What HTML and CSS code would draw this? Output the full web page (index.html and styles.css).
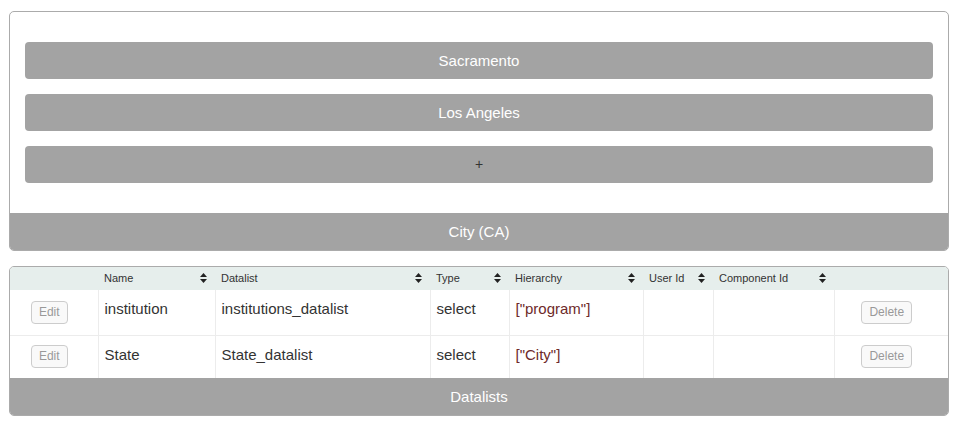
FILE: index.html
```html
<!DOCTYPE html>
<html>
<head>
<meta charset="utf-8">
<link rel="stylesheet" href="styles.css">
</head>
<body>
<div class="page">
  <section class="panel">
    <div class="panel-body">
      <div class="item">Sacramento</div>
      <div class="item">Los Angeles</div>
      <div class="item add">+</div>
    </div>
    <div class="panel-footer">City (CA)</div>
  </section>

  <section class="panel">
    <table class="grid">
      <colgroup>
        <col class="c-edit"><col class="c-name"><col class="c-datalist"><col class="c-type">
        <col class="c-hier"><col class="c-user"><col class="c-comp"><col class="c-del">
      </colgroup>
      <thead>
        <tr>
          <th></th>
          <th><span class="hd">Name</span><svg class="sort" viewBox="0 0 7 10"><path d="M0 4 3.5 0 7 4Z M0 6 3.5 10 7 6Z"/></svg></th>
          <th><span class="hd">Datalist</span><svg class="sort" viewBox="0 0 7 10"><path d="M0 4 3.5 0 7 4Z M0 6 3.5 10 7 6Z"/></svg></th>
          <th><span class="hd">Type</span><svg class="sort" viewBox="0 0 7 10"><path d="M0 4 3.5 0 7 4Z M0 6 3.5 10 7 6Z"/></svg></th>
          <th><span class="hd">Hierarchy</span><svg class="sort" viewBox="0 0 7 10"><path d="M0 4 3.5 0 7 4Z M0 6 3.5 10 7 6Z"/></svg></th>
          <th><span class="hd">User Id</span><svg class="sort" viewBox="0 0 7 10"><path d="M0 4 3.5 0 7 4Z M0 6 3.5 10 7 6Z"/></svg></th>
          <th><span class="hd">Component Id</span><svg class="sort" viewBox="0 0 7 10"><path d="M0 4 3.5 0 7 4Z M0 6 3.5 10 7 6Z"/></svg></th>
          <th></th>
        </tr>
      </thead>
      <tbody>
        <tr class="r1">
          <td class="btn-cell"><button class="btn">Edit</button></td>
          <td>institution</td>
          <td>institutions_datalist</td>
          <td>select</td>
          <td class="hier">["program"]</td>
          <td></td>
          <td></td>
          <td class="btn-cell"><button class="btn">Delete</button></td>
        </tr>
        <tr class="r2">
          <td class="btn-cell"><button class="btn">Edit</button></td>
          <td>State</td>
          <td>State_datalist</td>
          <td>select</td>
          <td class="hier">["City"]</td>
          <td></td>
          <td></td>
          <td class="btn-cell"><button class="btn">Delete</button></td>
        </tr>
      </tbody>
    </table>
    <div class="panel-footer">Datalists</div>
  </section>
</div>
</body>
</html>
```

FILE: styles.css
```css
* { box-sizing: border-box; }
body {
  margin: 0;
  background: #fff;
  font-family: "Liberation Sans", Arial, sans-serif;
  color: #333;
}
.page {
  display: flex;
  flex-direction: column;
  gap: 15px;
  padding: 11px 9px;
}
.panel {
  border: 1px solid #ababab;
  border-radius: 5px;
  overflow: hidden;
  background: #fff;
}
.panel-body {
  display: flex;
  flex-direction: column;
  gap: 15px;
  padding: 30px 15px;
}
.item {
  height: 37px;
  line-height: 37px;
  background: #a3a3a3;
  border-radius: 4px;
  color: #fff;
  font-size: 15px;
  text-align: center;
}
.item.add {
  color: #333;
  font-size: 14px;
}
.panel-footer {
  height: 37px;
  line-height: 37px;
  background: #a3a3a3;
  color: #fff;
  font-size: 15px;
  text-align: center;
}
.grid {
  width: 100%;
  border-collapse: collapse;
  table-layout: fixed;
}
.c-edit { width: 88px; }
.c-name { width: 117px; }
.c-datalist { width: 215px; }
.c-type { width: 79px; }
.c-hier { width: 134px; }
.c-user { width: 70px; }
.c-comp { width: 121px; }
.c-del { width: 114px; }
thead tr {
  background: #e6eeec;
  height: 23px;
}
th {
  font-size: 11px;
  font-weight: normal;
  color: #333;
  text-align: left;
  padding: 0 8px 0 6px;
  vertical-align: middle;
  white-space: nowrap;
}
th .hd { float: left; line-height: 23px; }
th .sort {
  float: right;
  width: 7px;
  height: 10px;
  margin-top: 6px;
  fill: #222;
}
td {
  font-size: 15px;
  line-height: 20px;
  padding: 9px 6px 0;
  vertical-align: top;
  border-left: 1px solid #ececec;
}
td:first-child { border-left: none; }
tr.r1 { height: 45px; }
tr.r1 td { border-bottom: 1px solid #ececec; }
tr.r2 { height: 43px; }
.hier { color: #6e2a2a; }
td.btn-cell {
  vertical-align: middle;
  text-align: center;
  padding: 0 9px 0 0;
}
.btn {
  font-family: "Liberation Sans", Arial, sans-serif;
  font-size: 12px;
  color: #999;
  background: #f9f9f9;
  border: 1px solid #ccc;
  border-radius: 4px;
  height: 23px;
  padding: 0 7px;
  line-height: 21px;
  cursor: default;
}
```
